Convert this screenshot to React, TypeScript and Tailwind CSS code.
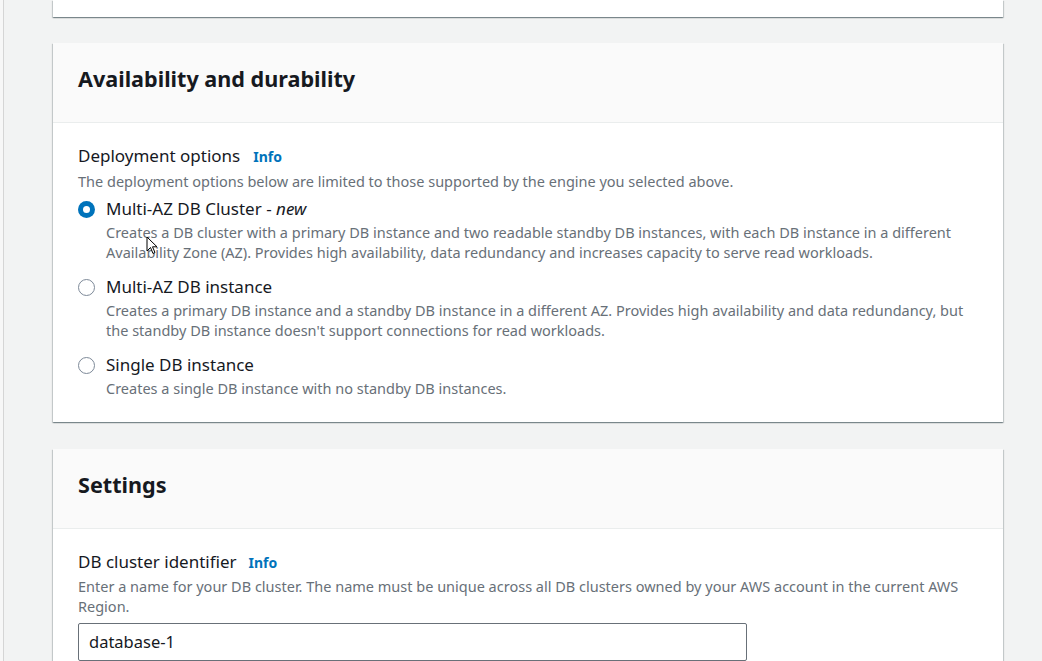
import React from "react";

const font = { fontFamily: '"Noto Sans", "Open Sans", Arial, sans-serif' };

function Radio({ checked }: { checked?: boolean }) {
  return checked ? (
    <span className="mt-[4px] flex h-[17px] w-[17px] shrink-0 items-center justify-center rounded-full bg-[#0073bb]">
      <span className="h-[7px] w-[7px] rounded-full bg-white" />
    </span>
  ) : (
    <span className="mt-[4px] h-[17px] w-[17px] shrink-0 rounded-full border-[1.5px] border-[#7d8998] bg-white" />
  );
}

function Option({
  checked,
  label,
  desc,
}: {
  checked?: boolean;
  label: React.ReactNode;
  desc: React.ReactNode;
}) {
  return (
    <div className="flex gap-[11px]">
      <Radio checked={checked} />
      <div>
        <div className="text-[17px] leading-[24px] text-[#16191f]">{label}</div>
        <div className="mt-[1px] text-[14.5px] leading-[20px] text-[#687078]">{desc}</div>
      </div>
    </div>
  );
}

const cardShadow =
  "shadow-[0_1px_1px_0_rgba(0,28,36,0.3),1px_1px_1px_0_rgba(0,28,36,0.15),-1px_1px_1px_0_rgba(0,28,36,0.15)]";

export default function App() {
  return (
    <div style={font} className="relative flex h-[661px] w-[1042px] overflow-hidden bg-[#f2f3f3]">
      <div className="w-[3px] bg-[#f7f7f7]" />
      <div className="w-px bg-[#d5d5d5]" />
      <div className="ml-[49px] flex w-[950px] flex-col">
        <div className={`h-[17px] bg-white ${cardShadow}`} />

        <div className={`mt-[26px] h-[379px] bg-white ${cardShadow}`}>
          <div className="h-[80px] border-b border-[#eaeded] bg-[#fafafa] px-[25px] pt-[22px]">
            <h2 className="text-[21.6px] font-bold leading-[28px] text-[#16191f]">
              Availability and durability
            </h2>
          </div>
          <div className="px-[25px] pt-[21px]">
            <div className="flex items-baseline gap-[13px]">
              <span className="text-[17px] leading-[24px] text-[#16191f]">Deployment options</span>
              <span className="text-[14px] font-bold text-[#0073bb]">Info</span>
            </div>
            <div className="mt-[3px] text-[14.5px] leading-[20px] text-[#687078]">
              The deployment options below are limited to those supported by the engine you selected above.
            </div>
            <div className="mt-[6px] flex flex-col gap-[13px]">
              <Option
                checked
                label={
                  <>
                    Multi-AZ DB Cluster - <i>new</i>
                  </>
                }
                desc={
                  <>
                    Creates a DB cluster with a primary DB instance and two readable standby DB instances, with each DB instance in a different
                    <br />
                    Availability Zone (AZ). Provides high availability, data redundancy and increases capacity to serve read workloads.
                  </>
                }
              />
              <Option
                label="Multi-AZ DB instance"
                desc={
                  <>
                    Creates a primary DB instance and a standby DB instance in a different AZ. Provides high availability and data redundancy, but
                    <br />
                    the standby DB instance doesn't support connections for read workloads.
                  </>
                }
              />
              <Option label="Single DB instance" desc="Creates a single DB instance with no standby DB instances." />
            </div>
          </div>
        </div>

        <div className={`mt-[27px] flex-1 bg-white ${cardShadow}`}>
          <div className="h-[80px] border-b border-[#eaeded] bg-[#fafafa] px-[25px] pt-[22px]">
            <h2 className="text-[21.6px] font-bold leading-[28px] text-[#16191f]">Settings</h2>
          </div>
          <div className="px-[25px] pt-[21px]">
            <div className="flex items-baseline gap-[12px]">
              <span className="text-[17px] leading-[24px] text-[#16191f]">DB cluster identifier</span>
              <span className="text-[14px] font-bold text-[#0073bb]">Info</span>
            </div>
            <div className="mt-[2px] text-[14.5px] leading-[20px] text-[#687078]">
              Enter a name for your DB cluster. The name must be unique across all DB clusters owned by your AWS account in the current AWS
              <br />
              Region.
            </div>
            <div className="mt-[7px] flex h-[38px] w-[669px] items-center rounded-[2px] border border-[#687078] px-[10px] text-[16.5px] text-[#16191f]">
              database-1
            </div>
          </div>
        </div>
      </div>

      <svg className="absolute left-[146px] top-[236px]" width="12" height="19" viewBox="0 0 12 19">
        <path d="M1 1 L1 15 L4.5 11.5 L7 17.5 L9 16.5 L6.5 10.8 L11 10.8 Z" fill="white" stroke="black" strokeWidth="1" strokeLinejoin="round" />
      </svg>
    </div>
  );
}
